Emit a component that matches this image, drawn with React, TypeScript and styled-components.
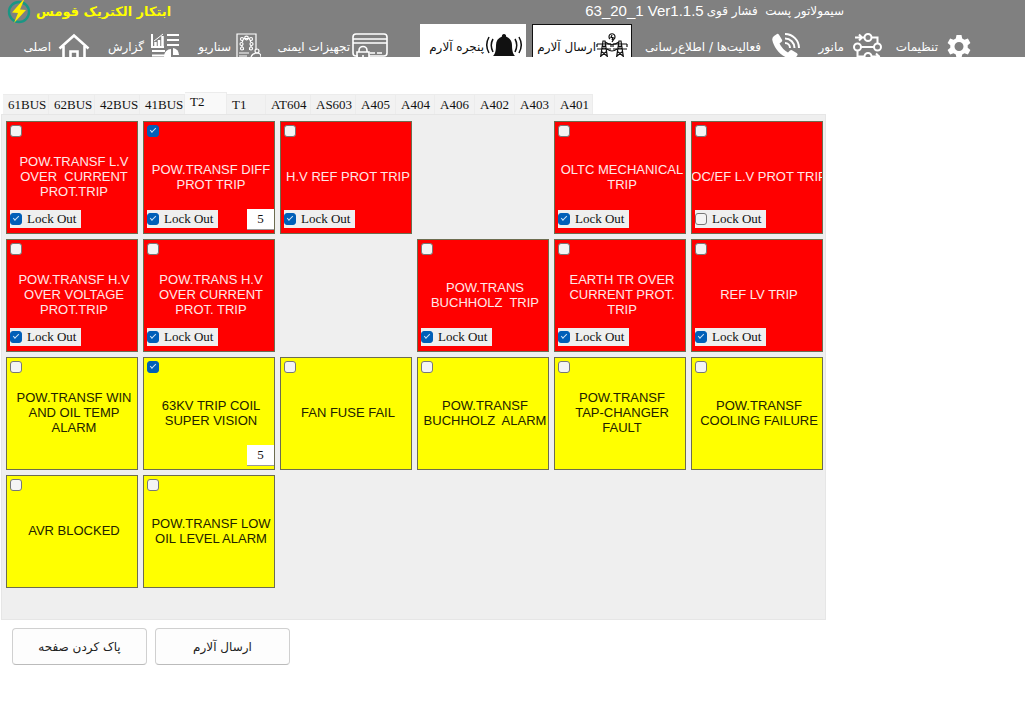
import React, { useState } from "react";
import styled, { createGlobalStyle, css } from "styled-components";

const persian = `"DejaVu Sans", sans-serif`;
const serif = `"Liberation Serif", "DejaVu Sans", serif`;
const sans = `"Liberation Sans", sans-serif`;

const GlobalStyle = createGlobalStyle`
  *, *::before, *::after { box-sizing: border-box; }
  body { margin: 0; background: #fff; font-family: ${serif}; color: #111; }
  button, input { font: inherit; color: inherit; }
`;

const Header = styled.header`
  height: 57px;
  overflow: hidden;
  background: #808080;
  color: #fff;
`;

const TitleBar = styled.div`
  display: flex;
  justify-content: space-between;
  height: 24px;
  padding: 0 181px 0 5px;
`;

const Brand = styled.div`
  display: flex;
  align-items: center;
  gap: 5px;
  font: bold 13px/24px ${persian};
  color: #ffff00;
`;

const Title = styled.h1`
  display: flex;
  gap: 3px;
  margin: 0;
  font: 12px/22px ${persian};
  white-space: pre;
`;

const Version = styled.span`
  font: 15px/22px ${sans};
`;

const Nav = styled.nav`
  display: flex;
  align-items: flex-start;
`;

const NavItem = styled.button<{ $width: number; $gap: number; $tone?: "light" | "framed" }>`
  display: flex;
  flex: 0 0 ${(p) => p.$width}px;
  justify-content: flex-end;
  align-items: flex-start;
  gap: ${(p) => p.$gap}px;
  height: 48px;
  padding: 8px 0 0;
  border: 1px solid transparent;
  border-width: 1px 0;
  background: none;
  font: 12px/28px ${persian};
  white-space: nowrap;
  svg { flex: none; }
  ${(p) =>
    p.$tone &&
    css`
      margin-left: ${p.$tone === "light" ? 32 : 6}px;
      padding-right: 3px;
      border: 1px solid ${p.$tone === "light" ? "#fff" : "#111"};
      background: #fff;
      color: #111;
    `}
`;

const Main = styled.main`
  padding: 35px 0 24px 1px;
`;

const Tabs = styled.div`
  display: flex;
  align-items: flex-end;
  padding-left: 2px;
`;

const Tab = styled.button<{ $active: boolean; $width: number }>`
  flex: 0 0 ${(p) => p.$width}px;
  height: ${(p) => (p.$active ? 22 : 20)}px;
  padding: 0 0 ${(p) => (p.$active ? 3 : 0)}px 5px;
  border: 1px solid #ececec;
  border-width: 1px 1px 0 0;
  background: ${(p) => (p.$active ? "#f9f9f9" : "#f2f2f2")};
  font: 13px/16px ${serif};
  text-align: left;
`;

const Panel = styled.section`
  width: fit-content;
  min-height: 506px;
  padding: 6px 2px 30px 4px;
  border: 1px solid #e6e6e6;
  background: #efefef;
`;

const AlarmGrid = styled.div`
  display: grid;
  grid-template-columns: repeat(6, 132px);
  grid-auto-rows: 113px;
  gap: 5px;
`;

const AlarmCell = styled.article<{ $kind: Kind; $column: number }>`
  display: grid;
  grid-template: 100% / 100%;
  grid-column: ${(p) => p.$column};
  overflow: hidden;
  border: 1px solid #6d6d50;
  background: ${(p) => (p.$kind === "trip" ? "#ff0000" : "#ffff00")};
  color: ${(p) => (p.$kind === "trip" ? "#ffe9e9" : "#222200")};
  > * { grid-area: 1 / 1; }
`;

const AlarmName = styled.label`
  align-self: center;
  justify-self: center;
  padding: 0 0 2px 4px;
  font: 13px/15px ${sans};
  text-align: center;
  white-space: pre;
`;

const Check = styled.input`
  position: relative;
  appearance: none;
  flex: none;
  width: 12px;
  height: 12px;
  margin: 0;
  border: 1px solid #777;
  border-radius: 3px;
  background: #f4f4f4;
  &:checked { border-color: #005fb8; background: #005fb8; }
  &:checked::after {
    content: "";
    position: absolute;
    left: 2px;
    top: 2px;
    width: 6px;
    height: 3px;
    border: solid #cfe4f7;
    border-width: 0 0 1px 1px;
    transform: rotate(-45deg);
  }
`;

const CellCheck = styled(Check)`
  z-index: 1;
  align-self: start;
  margin: 3px;
`;

const CellFooter = styled.div`
  display: flex;
  align-self: end;
  justify-content: space-between;
  align-items: center;
  height: 22px;
  margin: 0 0 3px 3px;
`;

const LockLabel = styled.label`
  display: flex;
  align-items: center;
  gap: 5px;
  width: 71px;
  height: 18px;
  background: #efefef;
  color: #111;
  font: 13px/18px ${serif};
`;

const Delay = styled.input`
  width: 27px;
  height: 21px;
  margin-left: auto;
  padding: 0;
  border: 0;
  border-bottom: 1px solid #999;
  background: #fff;
  color: #111;
  font: 13px/20px ${serif};
  text-align: center;
`;

const Actions = styled.div`
  display: flex;
  gap: 8px;
  padding: 8px 11px;
`;

const Action = styled.button`
  width: 135px;
  height: 37px;
  border: 1px solid #d0d0d0;
  border-bottom-color: #bbb;
  border-radius: 4px;
  background: #fdfdfd;
  color: #222;
  font: 12px/20px ${persian};
`;

const stroke = { fill: "none", stroke: "currentColor", strokeWidth: 2 } as const;

const BoltLogo = () => (
  <svg width="26" height="24" viewBox="0 0 26 24" aria-hidden="true">
    <circle cx="14" cy="12" r="10" fill="none" stroke="#1a9684" strokeWidth="2.4" />
    <path d="M18 0 7 12.500l6 .5-4 10 12-13-6-.5L19 0Z" fill="#ffee00" />
  </svg>
);
const HomeIcon = () => (
  <svg width="32" height="30" viewBox="0 0 32 30" {...stroke} strokeWidth={2.6} aria-hidden="true">
    <path d="M1.500 15.500 16 2.500l14.500 13M5.500 13v16h21V13M12.500 29V18.500h7V29" />
  </svg>
);
const ReportIcon = () => (
  <svg width="28" height="30" viewBox="0 0 28 30" {...stroke} aria-hidden="true">
    <path d="M1 1v13h12M16 2h12M16 7h12M16 12h12M1 18h13M1 22.500h13" />
    <path d="M4.500 13V9M8 13V7M11.500 13V3" strokeWidth="2.500" />
    <path d="m3 8 4-3 5-4" strokeWidth="1" />
    <path d="M20 16a7 7 0 1 0 7 8h-7Z" fill="currentColor" stroke="none" />
    <path d="M22 15a7 7 0 0 1 6 7h-6Z" fill="currentColor" stroke="none" />
  </svg>
);
const ScenarioIcon = () => (
  <svg width="25" height="30" viewBox="0 0 25 30" {...stroke} strokeWidth={1.2} aria-hidden="true">
    <path d="M20 17V1H1v28h15M3 20h10M3 23h8" />
    <path d="M8 5.500h5M6.500 7v2M14.500 7v2M6 12v2M15 12v2M7 16.500h1M13 16.500h1" />
    <circle cx="10.500" cy="5" r="1.800" />
    <circle cx="6" cy="6" r="1.500" />
    <circle cx="15" cy="6" r="1.500" />
    <circle cx="5.500" cy="11" r="1.500" />
    <circle cx="15.500" cy="11" r="1.500" />
    <circle cx="6" cy="15.500" r="1.500" />
    <circle cx="15" cy="15.500" r="1.500" />
    <circle cx="21" cy="18" r="2" />
    <path d="M15 24c1-3 3-4 6-4s4 1 4 4" />
  </svg>
);
const SafetyIcon = () => (
  <svg width="36" height="30" viewBox="0 0 36 30" {...stroke} strokeWidth={1.6} aria-hidden="true">
    <path d="M6 23H4q-3 0-3-3V4q0-3 3-3h28q3 0 3 3v16q0 3-3 3H17M1 6h34M1 10h34M18 20h5M25 20h5" />
    <path d="M7 18.500v-1a4 4 0 0 1 8 0v1M5 19h12v9H5ZM11 22v3" />
  </svg>
);
const BellIcon = () => (
  <svg width="36" height="30" viewBox="0 0 36 30" {...stroke} strokeWidth={1.5} aria-hidden="true">
    <path
      d="M18 1a2 2 0 0 0-2 2.500C12 5 10 8 10 12c0 6-1 9-3 11h22c-2-2-3-5-3-11 0-4-2-7-6-8.500A2 2 0 0 0 18 1Z"
      fill="currentColor"
      stroke="none"
    />
    <path d="M7 6q-3.500 6 0 13M3 4q-4.500 8 0 16M29 6q3.500 6 0 13M33 4q4.500 8 0 16" />
  </svg>
);
const PylonIcon = () => (
  <svg width="32" height="30" viewBox="0 0 32 30" {...stroke} strokeWidth={1.2} aria-hidden="true">
    <path d="M4 28 7 8h2l3 20M1 11h14M1 16h14M1 11v3M15 11v3M5 18l6 5M11 18l-6 5M6 12l4 4M10 12l-4 4" />
    <path d="m20 28 3-20h2l3 20M17 11h14M17 16h14M17 11v3M31 11v3M21 18l6 5M27 18l-6 5M22 12l4 4M26 12l-4 4" />
    <path d="M9 9q7 5 14 0M11 16q5 4 10 0" />
    <path d="M14 6a3 3 0 1 1 4 0l-2 3M16 2l-1 2.500h2L16 7" />
  </svg>
);
const CallIcon = () => (
  <svg width="28" height="30" viewBox="0 0 28 30" {...stroke} aria-hidden="true">
    <path
      d="m2 3 3-2q1-.5 2 .7l3 5q.6 1-.4 2L7.500 10.500q3 6 8.500 9l2-2q1-1 2-.3l5 3q1 1 .4 2l-2 3q-1.400 1.500-4 1C9 24 2 15 .3 7Q0 4.500 2 3Z"
      fill="currentColor"
      stroke="none"
    />
    <path d="M13 1a14 14 0 0 1 14 14M13 5.500A9.500 9.500 0 0 1 22.500 15M13 10a5 5 0 0 1 5 5" />
  </svg>
);
const ManeuverIcon = () => (
  <svg width="29" height="30" viewBox="0 0 29 30" {...stroke} aria-hidden="true">
    <circle cx="15" cy="4.500" r="3.500" />
    <circle cx="4.500" cy="14" r="3.500" />
    <circle cx="24.500" cy="14" r="3.500" />
    <circle cx="15" cy="23.500" r="3.500" />
    <path d="M2 4.500h9M6 1.500l3 3-3 3M18.500 4.500h6v6M8 14h13M4.500 17.500v6h7M18.500 23.500H27M23 20.500l3 3-3 3" />
  </svg>
);
const GearIcon = () => (
  <svg width="24" height="30" viewBox="0 0 24 30" aria-hidden="true">
    <path
      fill="currentColor"
      fillRule="evenodd"
      d="M9.500 2h5l.7 3.500 2.300 1.300 3.400-1.200 2.500 4.300-2.700 2.300v2.600l2.700 2.300-2.500 4.300-3.400-1.200-2.300 1.300-.7 3.500h-5l-.7-3.500-2.300-1.300-3.400 1.200-2.500-4.300 2.700-2.300v-2.600L.6 9.900l2.500-4.300 3.400 1.200 2.300-1.300ZM12 9a4.500 4.500 0 1 0 0 9 4.500 4.500 0 0 0 0-9Z"
    />
  </svg>
);

type NavEntry = {
  text: string;
  width: number;
  gap: number;
  icon: () => React.ReactElement;
  tone?: "light" | "framed";
};

const navEntries: NavEntry[] = [
  { text: "اصلی", width: 90, gap: 7, icon: HomeIcon },
  { text: "گزارش", width: 89, gap: 7, icon: ReportIcon },
  { text: "سناریو", width: 82, gap: 5, icon: ScenarioIcon },
  { text: "تجهیزات ایمنی", width: 127, gap: 2, icon: SafetyIcon },
  { text: "پنجره آلارم", width: 106, gap: 2, icon: BellIcon, tone: "light" },
  { text: "ارسال آلارم", width: 100, gap: 0, icon: PylonIcon, tone: "framed" },
  { text: "فعالیت‌ها / اطلاع‌رسانی", width: 168, gap: 11, icon: CallIcon },
  { text: "مانور", width: 82, gap: 9, icon: ManeuverIcon },
  { text: "تنظیمات", width: 89, gap: 9, icon: GearIcon },
];

const tabs: [string, number][] = [
  ["61BUS", 46], ["62BUS", 46], ["42BUS", 45], ["41BUS", 45], ["T2", 42], ["T1", 39],
  ["AT604", 45], ["AS603", 45], ["A405", 40], ["A404", 39], ["A406", 40], ["A402", 40],
  ["A403", 40], ["A401", 38],
];

type Kind = "trip" | "alarm";
type Alarm = { name: string; column: number; kind: Kind; on?: boolean; lock?: boolean; delay?: number };

const alarms: Alarm[] = [
  { name: "POW.TRANSF L.V\nOVER  CURRENT\nPROT.TRIP", column: 1, kind: "trip", lock: true },
  { name: "POW.TRANSF DIFF\nPROT TRIP", column: 2, kind: "trip", on: true, lock: true, delay: 5 },
  { name: "H.V REF PROT TRIP", column: 3, kind: "trip", lock: true },
  { name: "OLTC MECHANICAL\nTRIP", column: 5, kind: "trip", lock: true },
  { name: "OC/EF L.V PROT TRIP", column: 6, kind: "trip", lock: false },
  { name: "POW.TRANSF H.V\nOVER VOLTAGE\nPROT.TRIP", column: 1, kind: "trip", lock: true },
  { name: "POW.TRANS H.V\nOVER CURRENT\nPROT. TRIP", column: 2, kind: "trip", lock: true },
  { name: "POW.TRANS\nBUCHHOLZ  TRIP", column: 4, kind: "trip", lock: true },
  { name: "EARTH TR OVER\nCURRENT PROT.\nTRIP", column: 5, kind: "trip", lock: true },
  { name: "REF LV TRIP", column: 6, kind: "trip", lock: true },
  { name: "POW.TRANSF WIN\nAND OIL TEMP\nALARM", column: 1, kind: "alarm" },
  { name: "63KV TRIP COIL\nSUPER VISION", column: 2, kind: "alarm", on: true, delay: 5 },
  { name: "FAN FUSE FAIL", column: 3, kind: "alarm" },
  { name: "POW.TRANSF\nBUCHHOLZ  ALARM", column: 4, kind: "alarm" },
  { name: "POW.TRANSF\nTAP-CHANGER\nFAULT", column: 5, kind: "alarm" },
  { name: "POW.TRANSF\nCOOLING FAILURE", column: 6, kind: "alarm" },
  { name: "AVR BLOCKED", column: 1, kind: "alarm" },
  { name: "POW.TRANSF LOW\nOIL LEVEL ALARM", column: 2, kind: "alarm" },
];

function AlarmTile({ alarm, id }: { alarm: Alarm; id: string }) {
  const hasLock = alarm.lock !== undefined;
  return (
    <AlarmCell $kind={alarm.kind} $column={alarm.column}>
      <AlarmName htmlFor={id}>{alarm.name}</AlarmName>
      <CellCheck type="checkbox" id={id} defaultChecked={alarm.on} />
      {(hasLock || alarm.delay !== undefined) && (
        <CellFooter>
          {hasLock && (
            <LockLabel>
              <Check type="checkbox" defaultChecked={alarm.lock} />
              Lock Out
            </LockLabel>
          )}
          {alarm.delay !== undefined && <Delay aria-label="Delay" defaultValue={alarm.delay} />}
        </CellFooter>
      )}
    </AlarmCell>
  );
}

export default function App() {
  const [active, setActive] = useState("T2");
  return (
    <>
      <GlobalStyle />
      <Header>
        <TitleBar>
          <Brand>
            <BoltLogo />
            <span dir="rtl">ابتکار الکتریک قومس</span>
          </Brand>
          <Title>
            <Version>63_20_1 Ver1.1.5</Version>
            <span dir="rtl">{"سیمولاتور پست  فشار قوی"}</span>
          </Title>
        </TitleBar>
        <Nav>
          {navEntries.map(({ text, width, gap, icon: Icon, tone }) => (
            <NavItem key={text} type="button" $width={width} $gap={gap} $tone={tone}>
              <span dir="rtl">{text}</span>
              <Icon />
            </NavItem>
          ))}
        </Nav>
      </Header>
      <Main>
        <Tabs role="tablist">
          {tabs.map(([name, width]) => (
            <Tab
              key={name}
              type="button"
              role="tab"
              aria-selected={name === active}
              $active={name === active}
              $width={width}
              onClick={() => setActive(name)}
            >
              {name}
            </Tab>
          ))}
        </Tabs>
        <Panel role="tabpanel">
          <AlarmGrid>
            {alarms.map((alarm, i) => (
              <AlarmTile key={alarm.name} alarm={alarm} id={`alarm-${i}`} />
            ))}
          </AlarmGrid>
        </Panel>
        <Actions>
          <Action type="button" dir="rtl">پاک کردن صفحه</Action>
          <Action type="button" dir="rtl">ارسال آلارم</Action>
        </Actions>
      </Main>
    </>
  );
}
